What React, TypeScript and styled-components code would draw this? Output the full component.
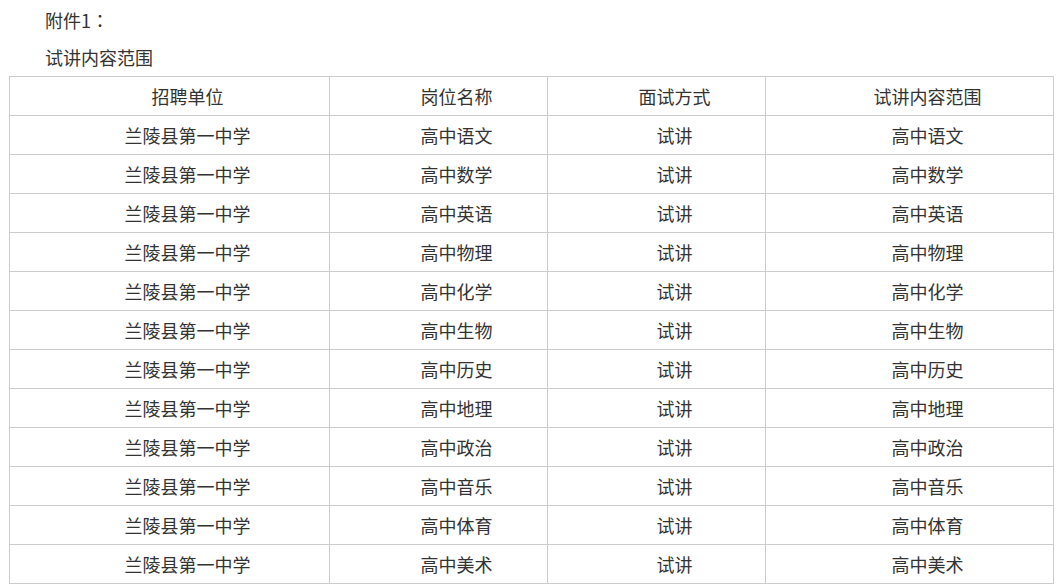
import React from "react";
import styled, { createGlobalStyle } from "styled-components";

const Global = createGlobalStyle`
  html, body { margin: 0; padding: 0; background: #fff; }
  body { font-family: "Noto Sans CJK SC", "Noto Sans", sans-serif; color: #333; }
`;

const Page = styled.div`
  padding: 2px 0 0 9px;
  width: 1044px;
`;

const Para = styled.p`
  margin: 0;
  font-size: 18px;
  line-height: 37px;
  text-indent: 36px;
  color: #333;
`;

const Colon = styled.span`
  font-family: "Noto Sans CJK TC", "Noto Sans CJK SC", sans-serif;
`;

const Table = styled.table`
  border-collapse: collapse;
  table-layout: fixed;
  width: 1044px;
  font-size: 18px;
  color: #333;
`;

const Cell = styled.td`
  border: 1px solid #ccc;
  height: 38px;
  padding: 0;
  text-align: center;
  text-indent: 36px;
  vertical-align: middle;
  line-height: 38px;
  white-space: nowrap;
`;

const subjects = ["语文", "数学", "英语", "物理", "化学", "生物", "历史", "地理", "政治", "音乐", "体育", "美术"];

export default function App() {
  return (
    <>
      <Global />
      <Page>
        <Para>
          附件1<Colon>：</Colon>
        </Para>
        <Para>试讲内容范围</Para>
        <Table>
          <colgroup>
            <col style={{ width: 320 }} />
            <col style={{ width: 218 }} />
            <col style={{ width: 218 }} />
            <col style={{ width: 288 }} />
          </colgroup>
          <tbody>
            <tr>
              <Cell>招聘单位</Cell>
              <Cell>岗位名称</Cell>
              <Cell>面试方式</Cell>
              <Cell>试讲内容范围</Cell>
            </tr>
            {subjects.map((s) => (
              <tr key={s}>
                <Cell>兰陵县第一中学</Cell>
                <Cell>高中{s}</Cell>
                <Cell>试讲</Cell>
                <Cell>高中{s}</Cell>
              </tr>
            ))}
          </tbody>
        </Table>
      </Page>
    </>
  );
}
